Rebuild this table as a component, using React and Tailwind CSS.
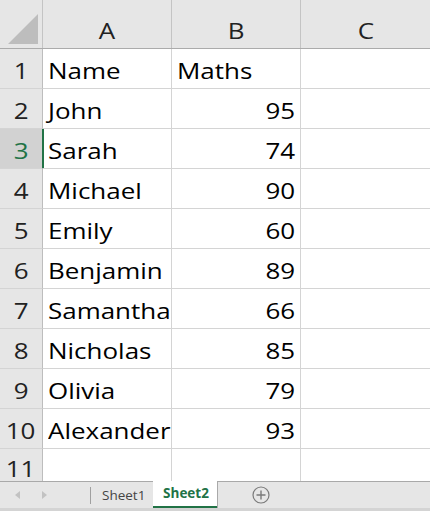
import React from 'react';

const rows = [
  ['Name', 'Maths'],
  ['John', 95],
  ['Sarah', 74],
  ['Michael', 90],
  ['Emily', 60],
  ['Benjamin', 89],
  ['Samantha', 66],
  ['Nicholas', 85],
  ['Olivia', 79],
  ['Alexander', 93],
];

const font = { fontFamily: '"Open Sans", "Liberation Sans", sans-serif' };

const Txt = ({ children, right }) => (
  <span
    className={
      'inline-block text-[22px] leading-none scale-x-[1.18] whitespace-nowrap ' +
      (right ? 'origin-right' : 'origin-left')
    }
  >
    {children}
  </span>
);

const RowHead = ({ n, active }) => (
  <div
    className={
      'w-[43px] shrink-0 flex items-center justify-center pt-[3px] border-b border-[#d4d4d4] ' +
      (active
        ? 'bg-[#d2d2d2] text-[#217346] border-r-2 border-r-[#217346] w-[44px] -mr-px'
        : 'bg-[#e6e6e6] text-[#222] border-r border-r-[#bdbdbd]')
    }
  >
    <span className="inline-block text-[22px] leading-none scale-x-[1.18]">{n}</span>
  </div>
);

export default function App() {
  return (
    <div className="w-[430px] h-[511px] overflow-hidden bg-white flex flex-col text-black" style={font}>
      {/* column headers */}
      <div className="h-[49px] shrink-0 flex bg-[#e6e6e6] border-b border-[#ababab]">
        <div className="w-[43px] shrink-0 border-r border-[#c4c4c4] relative">
          <svg className="absolute left-[8px] top-[14px]" width="31" height="31" viewBox="0 0 31 31">
            <polygon points="30,0 30,30 0,30" fill="#bdbdbd" />
          </svg>
        </div>
        {['A', 'B'].map((c) => (
          <div
            key={c}
            className="w-[129px] shrink-0 border-r border-[#c4c4c4] flex items-end justify-center pb-[7px] text-[#222]"
          >
            <span className="inline-block text-[22px] leading-none scale-x-[1.18]">{c}</span>
          </div>
        ))}
        <div className="flex-1 flex items-end justify-center pb-[7px] text-[#222]">
          <span className="inline-block text-[22px] leading-none scale-x-[1.18]">C</span>
        </div>
      </div>

      {/* data rows */}
      {rows.map(([name, score], i) => (
        <div key={i} className="h-[40px] shrink-0 flex">
          <RowHead n={i + 1} active={i === 2} />
          <div className="w-[129px] shrink-0 border-r border-b border-[#d4d4d4] flex items-center pl-[5px] pt-[3px]">
            <Txt>{name}</Txt>
          </div>
          <div
            className={
              'w-[129px] shrink-0 border-r border-b border-[#d4d4d4] flex items-center pr-[5px] pt-[3px] ' +
              (typeof score === 'number' ? 'justify-end' : 'justify-start pl-[5px]')
            }
          >
            <Txt right={typeof score === 'number'}>{score}</Txt>
          </div>
          <div className="flex-1 border-b border-[#d4d4d4]" />
        </div>
      ))}

      {/* row 11 */}
      <div className="flex-1 flex">
        <div className="w-[43px] shrink-0 bg-[#e6e6e6] border-r border-[#bdbdbd] flex items-center justify-center text-[#222] pt-[6px]">
          <span className="inline-block text-[22px] leading-none scale-x-[1.18]">11</span>
        </div>
        <div className="w-[129px] shrink-0 border-r border-[#d4d4d4]" />
        <div className="w-[129px] shrink-0 border-r border-[#d4d4d4]" />
        <div className="flex-1" />
      </div>

      {/* sheet tabs */}
      <div className="h-[30px] shrink-0 flex flex-col bg-[#e6e6e6] text-[13.5px]">
        <div className="flex-1 flex">
          <div className="w-[153px] shrink-0 flex items-center border-t border-[#a9a9a9]">
            <svg className="ml-[15px]" width="6" height="8" viewBox="0 0 6 8">
              <polygon points="5,0 5,8 0,4" fill="#c2c2c2" />
            </svg>
            <svg className="ml-[21px]" width="6" height="8" viewBox="0 0 6 8">
              <polygon points="0,0 0,8 5,4" fill="#c2c2c2" />
            </svg>
            <div className="ml-[42px] w-px h-[17px] bg-[#a0a0a0]" />
            <span className="ml-[11px] text-[#444]">Sheet1</span>
          </div>
          <div className="w-[65px] shrink-0 bg-white border-r border-[#a9a9a9] flex flex-col">
            <div className="flex-1 flex items-center justify-center font-bold text-[#217346] pl-[2px]">Sheet2</div>
            <div className="h-[2px] bg-[#217346]" />
          </div>
          <div className="flex-1 border-t border-[#a9a9a9] flex items-center">
            <svg className="ml-[34px]" width="18" height="18" viewBox="0 0 18 18">
              <circle cx="9" cy="9" r="8" fill="none" stroke="#7a7a7a" strokeWidth="1.2" />
              <path d="M9 4.5v9M4.5 9h9" stroke="#7a7a7a" strokeWidth="1.4" />
            </svg>
          </div>
        </div>
        <div className="h-[3px] bg-[#d4d4d4]" />
      </div>
    </div>
  );
}
